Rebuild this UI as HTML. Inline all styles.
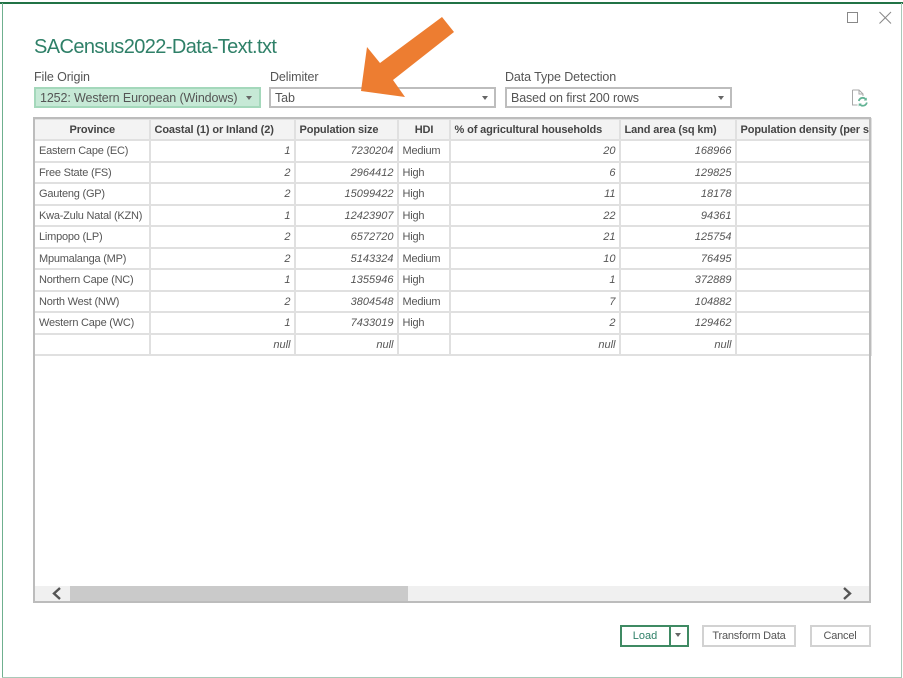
<!DOCTYPE html>
<html><head><meta charset="utf-8"><style>
html,body{margin:0;padding:0}
body{width:903px;height:678px;position:relative;overflow:hidden;background:#fff;font-family:"Liberation Sans",sans-serif;color:#444;font-size:12px}
div,span,svg{position:absolute}
.l{font-size:12.5px;color:#555;top:70px;letter-spacing:-.1px;white-space:nowrap}
.dd{top:86.5px;height:21.5px;box-sizing:border-box;border:2px solid #bdbdbd;background:#fff;line-height:19px;padding-left:4px;font-size:12.5px;letter-spacing:-.12px;white-space:nowrap;color:#555}
.ar{width:0;height:0;border-left:3.5px solid transparent;border-right:3.5px solid transparent;border-top:4px solid #666}
table{position:absolute;left:33px;top:118px;border-collapse:collapse;table-layout:fixed;width:837px;font-size:11px;letter-spacing:-.22px;color:#555}
td,th{border:2px solid #e0e0e0;height:21.5px;padding:1px 3px 0 4px;box-sizing:border-box;white-space:nowrap;overflow:hidden}
th{height:21px;padding-top:0;background:#f3f3f3;font-weight:bold;color:#444;text-align:left;padding-left:4px;letter-spacing:-.12px}
td.n{text-align:right;font-style:italic;letter-spacing:0}
td.p{padding-left:4px}
.btn{top:624.5px;height:22.5px;box-sizing:border-box;border:2px solid #d2d2d2;text-align:center;line-height:19px;font-size:11px;letter-spacing:-.2px;color:#555}
</style></head><body>
<div style="left:0;top:2px;width:903px;height:2px;background:#217346"></div>
<div style="left:2px;top:3px;width:1px;height:674px;background:#6fb08f"></div>
<div style="left:901px;top:3px;width:1px;height:674px;background:#a9c9b8"></div>
<div style="left:2px;top:677px;width:900px;height:1px;background:#a9c9b8"></div>

<svg style="left:845px;top:9px" width="50" height="18" viewBox="0 0 50 18"><rect x="2.5" y="3.5" width="10" height="10" fill="none" stroke="#888"/><path d="M34.5 3 L46 14.5 M46 3 L34.5 14.5" stroke="#888" fill="none"/></svg>

<div style="left:34px;top:36px;font-size:20px;color:#2f8068;letter-spacing:-.6px;white-space:nowrap">SACensus2022-Data-Text.txt</div>

<div class="l" style="left:34px">File Origin</div>
<div class="l" style="left:270px">Delimiter</div>
<div class="l" style="left:505px">Data Type Detection</div>

<div class="dd" style="left:34px;width:227px;background:#c6e9d6;border-color:#a4d8bb">1252: Western European (Windows)</div>
<div class="ar" style="left:246px;top:96px"></div>
<div class="dd" style="left:269px;width:227px">Tab</div>
<div class="ar" style="left:482px;top:96px"></div>
<div class="dd" style="left:505px;width:227px">Based on first 200 rows</div>
<div class="ar" style="left:718px;top:96px"></div>

<svg style="left:850px;top:88px" width="20" height="20" viewBox="0 0 20 20"><path d="M2.5 2 H9 L13 6 V8 M9 2 V6 H13 M2.5 2 V17 H7.5" fill="none" stroke="#a8a8a8"/><path d="M8.8 13 A4 4 0 0 1 15.5 11 M16.8 14.5 A4 4 0 0 1 10 16.5" fill="none" stroke="#62b394" stroke-width="1.8"/><path d="M16.8 9.5 V12.5 H13.8 Z M8.7 18.5 V15.5 H11.7 Z" fill="#62b394"/></svg>

<table>
<colgroup><col style="width:115.5px"><col style="width:145px"><col style="width:103px"><col style="width:52px"><col style="width:170px"><col style="width:116px"><col style="width:135.5px"></colgroup>
<tr><th style="text-align:center">Province</th><th>Coastal (1) or Inland (2)</th><th>Population size</th><th style="text-align:center">HDI</th><th>% of agricultural households</th><th>Land area (sq km)</th><th>Population density (per sq km)</th></tr>
<tr><td class="p">Eastern Cape (EC)</td><td class="n">1</td><td class="n">7230204</td><td>Medium</td><td class="n">20</td><td class="n">168966</td><td></td></tr>
<tr><td class="p">Free State (FS)</td><td class="n">2</td><td class="n">2964412</td><td>High</td><td class="n">6</td><td class="n">129825</td><td></td></tr>
<tr><td class="p">Gauteng (GP)</td><td class="n">2</td><td class="n">15099422</td><td>High</td><td class="n">11</td><td class="n">18178</td><td></td></tr>
<tr><td class="p">Kwa-Zulu Natal (KZN)</td><td class="n">1</td><td class="n">12423907</td><td>High</td><td class="n">22</td><td class="n">94361</td><td></td></tr>
<tr><td class="p">Limpopo (LP)</td><td class="n">2</td><td class="n">6572720</td><td>High</td><td class="n">21</td><td class="n">125754</td><td></td></tr>
<tr><td class="p">Mpumalanga (MP)</td><td class="n">2</td><td class="n">5143324</td><td>Medium</td><td class="n">10</td><td class="n">76495</td><td></td></tr>
<tr><td class="p">Northern Cape (NC)</td><td class="n">1</td><td class="n">1355946</td><td>High</td><td class="n">1</td><td class="n">372889</td><td></td></tr>
<tr><td class="p">North West (NW)</td><td class="n">2</td><td class="n">3804548</td><td>Medium</td><td class="n">7</td><td class="n">104882</td><td></td></tr>
<tr><td class="p">Western Cape (WC)</td><td class="n">1</td><td class="n">7433019</td><td>High</td><td class="n">2</td><td class="n">129462</td><td></td></tr>
<tr><td></td><td class="n">null</td><td class="n">null</td><td></td><td class="n">null</td><td class="n">null</td><td></td></tr>
</table>

<div style="left:33px;top:117px;width:838px;height:486px;box-sizing:border-box;border:2px solid #bcbcbc"></div>

<div style="left:35px;top:585.5px;width:834px;height:15.5px;background:#f0f0f0"></div>
<div style="left:70px;top:586px;width:338px;height:15px;background:#cacaca"></div>
<svg style="left:50px;top:587px" width="14" height="13" viewBox="0 0 14 13"><path d="M10 1 L4 6.5 L10 12" fill="none" stroke="#555" stroke-width="2.4"/></svg>
<svg style="left:840px;top:587px" width="14" height="13" viewBox="0 0 14 13"><path d="M4 1 L10 6.5 L4 12" fill="none" stroke="#555" stroke-width="2.4"/></svg>

<div class="btn" style="left:619.5px;width:51px;border-color:#3f8a63;color:#2f8068;letter-spacing:0">Load</div>
<div class="btn" style="left:670px;width:18.5px;border-color:#3f8a63;border-left-width:0"></div>
<div class="ar" style="left:675px;top:633px"></div>
<div class="btn" style="left:702px;width:94px">Transform Data</div>
<div class="btn" style="left:809.5px;width:61px">Cancel</div>

<svg style="left:0;top:0" width="903" height="120" viewBox="0 0 903 120"><path d="M442 17 L454 32 L393 80 L405 97 L361 91 L367 47 L380 63 Z" fill="#ed7d31"/></svg>
</body></html>
